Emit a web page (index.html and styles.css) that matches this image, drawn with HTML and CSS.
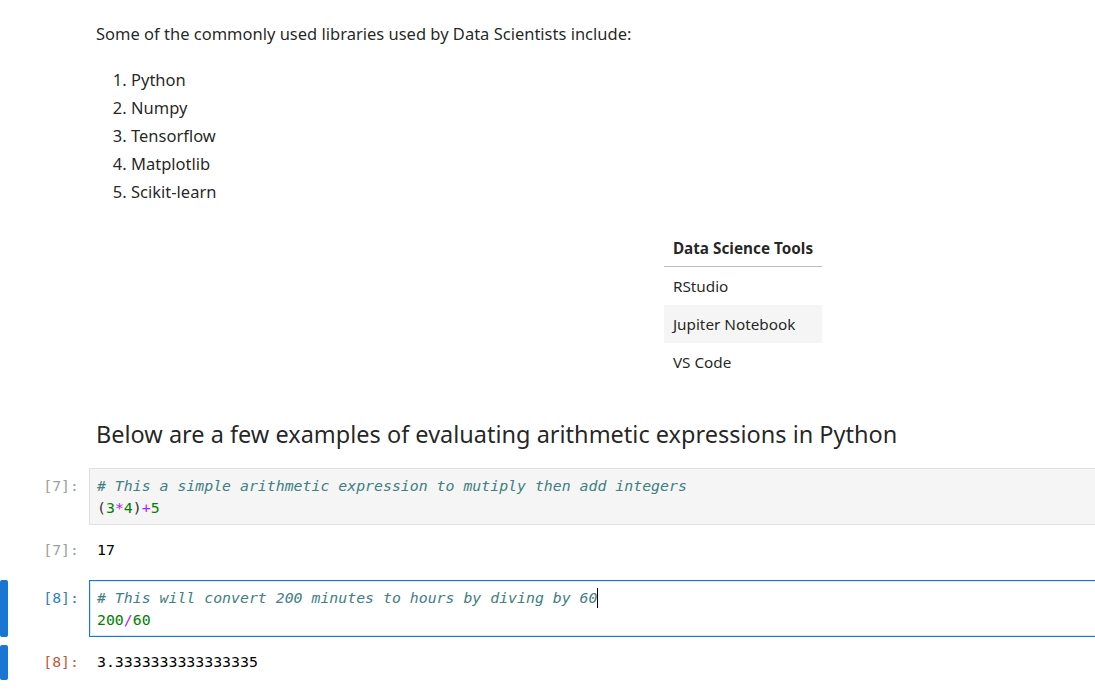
FILE: index.html
```html
<!DOCTYPE html>
<html>
<head>
<meta charset="utf-8">
<link rel="stylesheet" href="styles.css">
</head>
<body>
<div class="notebook">
  <div class="cell md-cell">
    <div class="collapser"></div>
    <div class="prompt"></div>
    <div class="md">
      <p class="para">Some of the commonly used libraries used by Data Scientists include:</p>
      <ol class="libs">
        <li>Python</li>
        <li>Numpy</li>
        <li>Tensorflow</li>
        <li>Matplotlib</li>
        <li>Scikit-learn</li>
      </ol>
      <table class="tools">
        <thead><tr><th>Data Science Tools</th></tr></thead>
        <tbody>
          <tr><td>RStudio</td></tr>
          <tr class="alt"><td>Jupiter Notebook</td></tr>
          <tr><td>VS Code</td></tr>
        </tbody>
      </table>
      <h2 class="heading">Below are a few examples of evaluating arithmetic expressions in Python</h2>
    </div>
  </div>

  <div class="cell code-cell">
    <div class="row">
      <div class="collapser"></div>
      <div class="prompt in">[7]:</div>
      <div class="input"><pre class="code"><span class="c"># This a simple arithmetic expression to mutiply then add integers</span>
<span class="p">(</span><span class="n">3</span><span class="o">*</span><span class="n">4</span><span class="p">)</span><span class="o">+</span><span class="n">5</span></pre></div>
    </div>
    <div class="row out-row">
      <div class="collapser"></div>
      <div class="prompt out">[7]:</div>
      <pre class="output">17</pre>
    </div>
  </div>

  <div class="cell code-cell active">
    <div class="row">
      <div class="collapser bar"></div>
      <div class="prompt in">[8]:</div>
      <div class="input"><pre class="code"><span class="c"># This will convert 200 minutes to hours by diving by 60</span><span class="cursor"></span>
<span class="n">200</span><span class="o">/</span><span class="n">60</span></pre></div>
    </div>
    <div class="row out-row">
      <div class="collapser bar"></div>
      <div class="prompt out">[8]:</div>
      <pre class="output">3.3333333333333335</pre>
    </div>
  </div>
</div>
</body>
</html>
```

FILE: styles.css
```css
html, body {
  margin: 0;
  padding: 0;
  background: #ffffff;
  overflow: hidden;
}

body {
  width: 1095px;
  height: 691px;
  font-family: "Noto Sans", "Open Sans", sans-serif;
  color: rgba(0, 0, 0, 0.87);
}

.notebook {
  width: 1400px;
  padding-top: 22px;
}

.cell {
  display: flex;
}

.code-cell {
  flex-direction: column;
  margin-bottom: 12px;
}

.row {
  display: flex;
  align-items: stretch;
}

.collapser {
  width: 8px;
  flex: none;
}

.collapser.bar {
  background: #1976d2;
  border-radius: 2px;
}

.prompt {
  width: 71px;
  flex: none;
  padding-right: 10px;
  text-align: right;
  font-family: "DejaVu Sans Mono", monospace;
  font-size: 14.85px;
  line-height: 22px;
}

.prompt.in {
  color: #9e9e9e;
  padding-top: 7px;
}

.prompt.out {
  color: #9e9e9e;
  padding-top: 6px;
}

.active .prompt.in {
  color: #307fc1;
}

.active .prompt.out {
  color: #bf5b3d;
}

.md {
  width: 1294px;
  padding-left: 7px;
  flex: none;
}

.para {
  margin: 0;
  font-size: 16.5px;
  line-height: 24px;
}

.libs {
  margin: 20px 0 0 0;
  padding-left: 35px;
  font-size: 16.5px;
  line-height: 28px;
}

.tools {
  margin: 24px auto 0 auto;
  width: 158px;
  border-collapse: collapse;
  font-size: 15.3px;
}

.tools th {
  text-align: left;
  font-weight: bold;
  padding: 8px 9px;
  line-height: 20px;
  white-space: nowrap;
  border-bottom: 1px solid #bdbdbd;
}

.tools td {
  padding: 9px 9px;
  line-height: 20px;
  white-space: nowrap;
}

.tools tr.alt td {
  background: #f5f5f5;
}

.heading {
  margin: 37px 0 0 0;
  font-size: 23.5px;
  font-weight: normal;
  line-height: 32px;
  padding-bottom: 18px;
}

.input {
  flex: 1;
  background: #f5f5f5;
  border: 1px solid #e0e0e0;
}

.active .input {
  background: #ffffff;
  border-color: #1976d2;
  box-shadow: inset 0 0 0 1px #d7eaf9;
}

.code {
  margin: 0;
  padding: 6px 8px 5px 7px;
  font-family: "DejaVu Sans Mono", monospace;
  font-size: 14.85px;
  line-height: 22px;
  color: #000000;
}

.code .c {
  color: #408080;
  font-style: italic;
}

.code .n {
  color: #008000;
}

.code .o {
  color: #aa22ff;
}

.code .p {
  color: #333333;
}

.cursor {
  display: inline-block;
  width: 0;
  height: 20px;
  border-right: 1px solid #000000;
  vertical-align: -5px;
}

.out-row {
  margin-top: 8px;
}

.output {
  margin: 0;
  padding: 6px 8px 7px 8px;
  font-family: "DejaVu Sans Mono", monospace;
  font-size: 14.85px;
  line-height: 22px;
  color: #000000;
}
```
